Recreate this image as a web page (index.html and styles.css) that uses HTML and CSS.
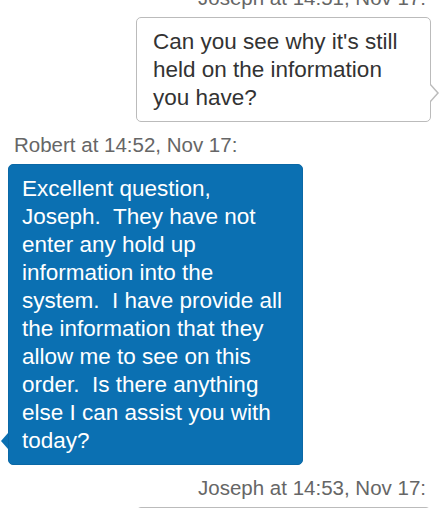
FILE: index.html
```html
<!DOCTYPE html>
<html lang="en">

<head>
    <meta charset="UTF-8">
    <title>Chat Transcript</title>
    <link rel="stylesheet" href="styles.css">
</head>

<body>
    <div id="chat">
        <!-- Customer message -->
        <div class="message out">
            <div class="meta">Joseph at 14:51, Nov 17:</div>
            <div class="bubble">Can you see why it's still held on the information you have?</div>
        </div>

        <!-- Agent message -->
        <div class="message in">
            <div class="meta">Robert at 14:52, Nov 17:</div>
            <div class="bubble">Excellent question, Joseph.&nbsp; They have not enter any hold up information into the system.&nbsp; I have provide all the information that they allow me to see on this order.&nbsp; Is there anything else I can assist you with today?</div>
        </div>

        <!-- Customer message -->
        <div class="message out">
            <div class="meta">Joseph at 14:53, Nov 17:</div>
            <div class="bubble">Thank you.</div>
        </div>
    </div>
</body>

</html>
```

FILE: styles.css
```css
/* Basic reset */
body,
html {
    overflow: hidden;
    margin: 0;
    padding: 0;
    height: 100%;
    background: #fff;
    font-family: "Liberation Sans", Arial, sans-serif;
}

/* Chat column, scrolled a little past the first timestamp */
#chat {
    display: flex;
    flex-direction: column;
    margin-top: -14px;
    padding: 0 12px 0 8px;
}

.message {
    display: flex;
    flex-direction: column;
    width: 295px;
    margin-bottom: 11px;
}

.message.out {
    align-self: flex-end;
}

.message.in {
    align-self: flex-start;
}

/* Timestamp line */
.meta {
    font-size: 20.5px;
    line-height: 23px;
    color: #666;
    margin-bottom: 8px;
}

.message.out .meta {
    text-align: right;
    padding-right: 5px;
}

.message.in .meta {
    padding-left: 6px;
}

/* Speech bubbles */
.bubble {
    position: relative;
    font-size: 22.5px;
    line-height: 28px;
    padding: 10px 12px 9px 16px;
    border-radius: 5px;
}

.message.out .bubble {
    background: #fff;
    color: #333;
    border: 1px solid #bbb;
}

.message.in .bubble {
    background: #0b70b2;
    color: #fff;
    border: 1px solid #0a68a6;
    padding-left: 13px;
}

/* Tails */
.bubble::before,
.bubble::after {
    content: "";
    position: absolute;
    width: 0;
    height: 0;
    border-style: solid;
}

.message.out .bubble::before {
    right: -9px;
    bottom: 18px;
    border-width: 10px 0 10px 9px;
    border-color: transparent transparent transparent #bbb;
}

.message.out .bubble::after {
    right: -7px;
    bottom: 19px;
    border-width: 9px 0 9px 8px;
    border-color: transparent transparent transparent #fff;
}

.message.in .bubble::before {
    left: -8px;
    bottom: 15px;
    border-width: 8px 7px 8px 0;
    border-color: transparent #0b70b2 transparent transparent;
}

.message.in .bubble::after {
    display: none;
}
```
